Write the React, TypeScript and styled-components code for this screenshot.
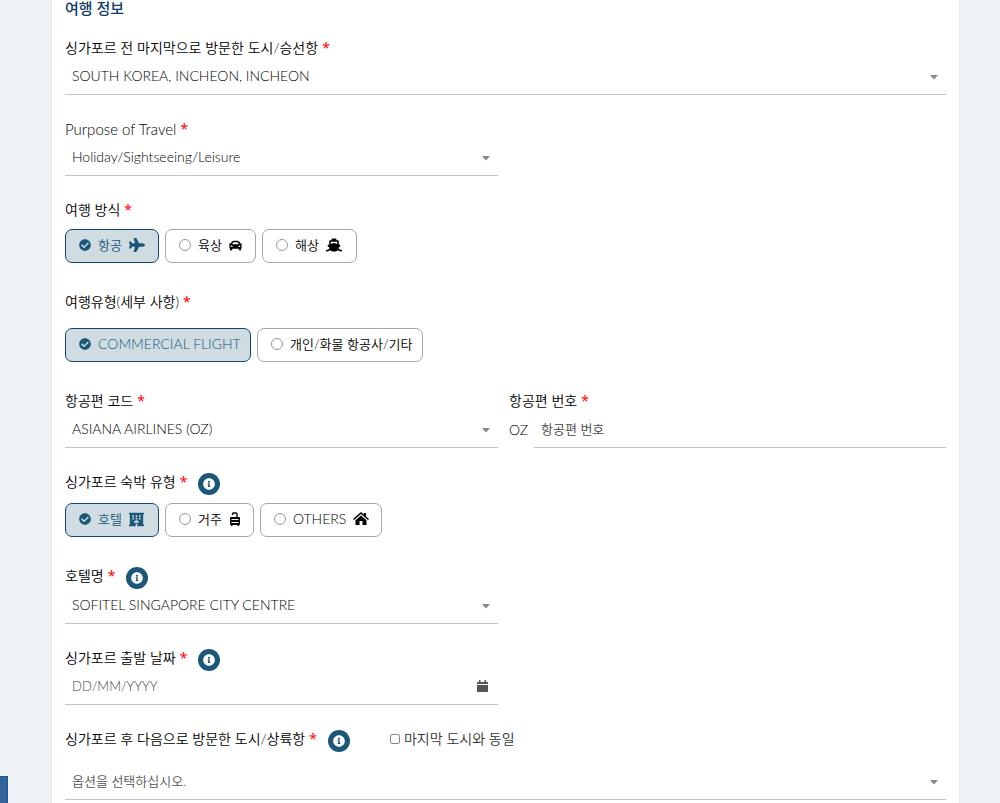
import React from "react";
import styled, { createGlobalStyle } from "styled-components";
import { FaCheckCircle, FaPlane, FaCar, FaShip, FaHotel, FaInfoCircle } from "react-icons/fa";

const GlobalStyle = createGlobalStyle`
  * { box-sizing: border-box; }
  body {
    margin: 0;
    background: #eef2f5;
    color: #000;
    font-family: Lato, "Noto Sans CJK KR", sans-serif;
    font-size: 14px;
    font-weight: 350;
    line-height: 20px;
  }
  input, select, button { font: inherit; color: inherit; }
`;

const Panel = styled.main`
  margin: 0 40px 0 51px;
  padding: 0 13px 3px;
  background: #fff;
  border: solid #e6eaec;
  border-width: 0 1px;
`;

const Title = styled.h2`
  margin: 0 0 22px;
  color: #0f3c66;
  font-size: 15px;
  font-weight: 500;
  line-height: 16px;
`;

const Columns = styled.div`
  display: grid;
  grid-template-columns: 433px 1fr;
  column-gap: 11px;
`;

const Field = styled.div<{ $half?: boolean; $after?: number }>`
  width: ${(p) => (p.$half ? "433px" : "100%")};
  margin-bottom: ${(p) => p.$after ?? 24}px;
`;

const Fieldset = styled.fieldset`
  min-width: 0;
  margin: 0 0 29px;
  padding: 0;
  border: 0;
`;

const Legend = styled.legend`
  display: flex;
  align-items: center;
  height: 20px;
  padding: 0;
`;

const LabelRow = styled.div<{ $after?: number; $large?: boolean }>`
  display: flex;
  align-items: center;
  height: 20px;
  margin-bottom: ${(p) => p.$after ?? 0}px;
  font-size: ${(p) => (p.$large ? 15 : 14)}px;
`;

const Star = styled.span`
  margin-left: 4px;
  color: #f00;
  font-family: "Noto Sans", sans-serif;
  font-size: 14px;
  font-weight: 400;
`;

const InfoButton = styled.button`
  display: flex;
  align-items: center;
  justify-content: center;
  width: 22px;
  height: 22px;
  margin: 4px 0 0 11px;
  padding: 0;
  border: 0;
  border-radius: 50%;
  background: #1b5778;
  color: #fff;
`;

const Control = styled.div`
  display: flex;
  align-items: center;
  height: 37px;
  padding: 0 8px 0 7px;
  border-bottom: 1px solid #c4c4c4;
`;

const Select = styled.select<{ $muted?: boolean }>`
  flex: 1;
  min-width: 0;
  padding: 0;
  border: 0;
  outline: 0;
  appearance: none;
  background: transparent;
  color: ${(p) => (p.$muted ? "#555" : "#000")};
  font-size: ${(p) => (p.$muted ? 13 : 14)}px;
`;

const TextInput = styled.input`
  flex: 1;
  min-width: 0;
  padding: 0;
  border: 0;
  outline: 0;
  background: transparent;
  font-size: 13px;
  &::placeholder { color: #444; opacity: 1; }
`;

const NumberRow = styled.div`
  display: grid;
  grid-template-columns: 25px 1fr;
  align-items: center;
`;

const Chips = styled.div<{ $before: number }>`
  display: flex;
  gap: 6px;
  padding-top: ${(p) => p.$before}px;
`;

const Chip = styled.label<{ $width: number; $on?: boolean }>`
  display: flex;
  align-items: center;
  width: ${(p) => p.$width}px;
  height: 34px;
  padding: 0 0 2px 13px;
  border: 1px solid ${(p) => (p.$on ? "#12466b" : "#a6a6a6")};
  border-radius: 7px;
  background: ${(p) => (p.$on ? "#cfdde3" : "#fff")};
  color: ${(p) => (p.$on ? "#1b5778" : "#000")};
  font-size: 13px;
  white-space: nowrap;
  svg { flex: none; }
`;

const Radio = styled.input`
  appearance: none;
  flex: none;
  width: 12px;
  height: 12px;
  margin: 0 7px 1px 0;
  border: 1px solid #999;
  border-radius: 50%;
  &:checked { display: none; }
`;

const ChipText = styled.span<{ $on?: boolean; $latin?: boolean }>`
  flex: none;
  margin-left: ${(p) => (p.$on ? 7 : 0)}px;
  margin-right: 7px;
  font-size: ${(p) => (p.$latin ? 14 : 13)}px;
`;

const CheckLabel = styled.label`
  display: flex;
  align-items: center;
  gap: 4px;
  margin-left: 40px;
  color: #333;
`;

const Checkbox = styled.input`
  appearance: none;
  width: 10px;
  height: 10px;
  margin: 0;
  border: 1px solid #888;
  border-radius: 2px;
`;

const CalendarButton = styled.button`
  display: flex;
  margin-right: 2px;
  padding: 0;
  border: 0;
  background: none;
  color: #555;
`;

const HelpTab = styled.button`
  position: fixed;
  left: 0;
  bottom: 0;
  width: 8px;
  height: 27px;
  padding: 0;
  border: solid #1a5696;
  border-width: 1px 1px 0 0;
  background: #34659a;
`;

const CaretIcon = styled.svg`
  margin-top: 2px;
`;

const Caret = () => (
  <CaretIcon width="8" height="5" viewBox="0 0 8 5" fill="#888" aria-hidden="true">
    <path d="M0 0h8L4 4.5z" />
  </CaretIcon>
);

const Luggage = () => (
  <svg width="12" height="14" viewBox="0 0 12 14" aria-hidden="true">
    <path d="M3.500 3V2Q3.500 1 4.500 1H7Q8 1 8 2V5" fill="none" stroke="currentColor" strokeWidth="1.300" />
    <path d="M2 5h8q1 0 1 1v6q0 1-1 1v1H8.500v-1h-5v1H2v-1q-1 0-1-1V6q0-1 1-1z" fill="currentColor" />
    <path d="M2.500 7.500h7M2.500 10.500h7" stroke="#fff" />
  </svg>
);

const House = () => (
  <svg width="16" height="14" viewBox="0 0 16 14" aria-hidden="true" fill="currentColor">
    <path d="M0 7 8 0l3 2.600V1h2v3.400L16 7l-1 1.100-7-6.100-7 6.100z" />
    <path d="m8 3.500 5.500 4.800V13H9.500V9h-3v4h-4V8.300z" />
  </svg>
);

const Calendar = () => (
  <svg width="11" height="12" viewBox="0 0 11 12" aria-hidden="true" fill="currentColor">
    <path d="M0 2h2V0h1.500v2h4V0H9v2h2v2H0zM0 5h11v7H0z" />
  </svg>
);

const Info = ({ about }: { about: string }) => (
  <InfoButton type="button" aria-label={about}>
    <FaInfoCircle size={12} />
  </InfoButton>
);

type PickProps = { id: string; value: string; muted?: boolean };
const Pick = ({ id, value, muted }: PickProps) => (
  <Control>
    <Select id={id} defaultValue={value} $muted={muted}>
      <option>{value}</option>
    </Select>
    <Caret />
  </Control>
);

type OptionProps = {
  group: string;
  text: string;
  width: number;
  on?: boolean;
  latin?: boolean;
  icon?: React.ReactNode;
};
const Option = ({ group, text, width, on, latin, icon }: OptionProps) => (
  <Chip $width={width} $on={on}>
    <Radio type="radio" name={group} defaultChecked={on} />
    {on && <FaCheckCircle size={12} />}
    <ChipText $on={on} $latin={latin}>{text}</ChipText>
    {icon}
  </Chip>
);

export default function App() {
  return (
    <>
      <GlobalStyle />
      <Panel>
        <Title>여행 정보</Title>

        <Field>
          <LabelRow>
            <label htmlFor="last-city">싱가포르 전 마지막으로 방문한 도시/승선항</label>
            <Star>*</Star>
          </LabelRow>
          <Pick id="last-city" value="SOUTH KOREA, INCHEON, INCHEON" />
        </Field>

        <Field $half>
          <LabelRow $large>
            <label htmlFor="purpose">Purpose of Travel</label>
            <Star>*</Star>
          </LabelRow>
          <Pick id="purpose" value="Holiday/Sightseeing/Leisure" />
        </Field>

        <Fieldset>
          <Legend>여행 방식<Star>*</Star></Legend>
          <Chips $before={9}>
            <Option group="mode" text="항공" width={94} on icon={<FaPlane size={16} />} />
            <Option group="mode" text="육상" width={91} icon={<FaCar size={13} />} />
            <Option group="mode" text="해상" width={95} icon={<FaShip size={16} />} />
          </Chips>
        </Fieldset>

        <Fieldset>
          <Legend>여행유형(세부 사항)<Star>*</Star></Legend>
          <Chips $before={16}>
            <Option group="type" text="COMMERCIAL FLIGHT" width={186} on latin />
            <Option group="type" text="개인/화물 항공사/기타" width={166} />
          </Chips>
        </Fieldset>

        <Columns>
          <Field>
            <LabelRow>
              <label htmlFor="carrier">항공편 코드</label>
              <Star>*</Star>
            </LabelRow>
            <Pick id="carrier" value="ASIANA AIRLINES (OZ)" />
          </Field>
          <Field>
            <LabelRow>
              <label htmlFor="flight-number">항공편 번호</label>
              <Star>*</Star>
            </LabelRow>
            <NumberRow>
              <span>OZ</span>
              <Control>
                <TextInput id="flight-number" placeholder="항공편 번호" />
              </Control>
            </NumberRow>
          </Field>
        </Columns>

        <Fieldset>
          <Legend>싱가포르 숙박 유형<Star>*</Star><Info about="숙박 유형 안내" /></Legend>
          <Chips $before={11}>
            <Option group="stay" text="호텔" width={94} on icon={<FaHotel size={15} />} />
            <Option group="stay" text="거주" width={89} icon={<Luggage />} />
            <Option group="stay" text="OTHERS" width={122} latin icon={<House />} />
          </Chips>
        </Fieldset>

        <Field $half>
          <LabelRow $after={1}>
            <label htmlFor="hotel">호텔명</label>
            <Star>*</Star>
            <Info about="호텔명 안내" />
          </LabelRow>
          <Pick id="hotel" value="SOFITEL SINGAPORE CITY CENTRE" />
        </Field>

        <Field $half>
          <LabelRow>
            <label htmlFor="departure">싱가포르 출발 날짜</label>
            <Star>*</Star>
            <Info about="출발 날짜 안내" />
          </LabelRow>
          <Control>
            <TextInput id="departure" placeholder="DD/MM/YYYY" />
            <CalendarButton type="button" aria-label="달력"><Calendar /></CalendarButton>
          </Control>
        </Field>

        <Field $after={0}>
          <LabelRow $after={14}>
            <label htmlFor="next-city">싱가포르 후 다음으로 방문한 도시/상륙항</label>
            <Star>*</Star>
            <Info about="다음 도시 안내" />
            <CheckLabel>
              <Checkbox type="checkbox" />
              마지막 도시와 동일
            </CheckLabel>
          </LabelRow>
          <Pick id="next-city" value="옵션을 선택하십시오." muted />
        </Field>
      </Panel>
      <HelpTab type="button" aria-label="도움말" />
    </>
  );
}
